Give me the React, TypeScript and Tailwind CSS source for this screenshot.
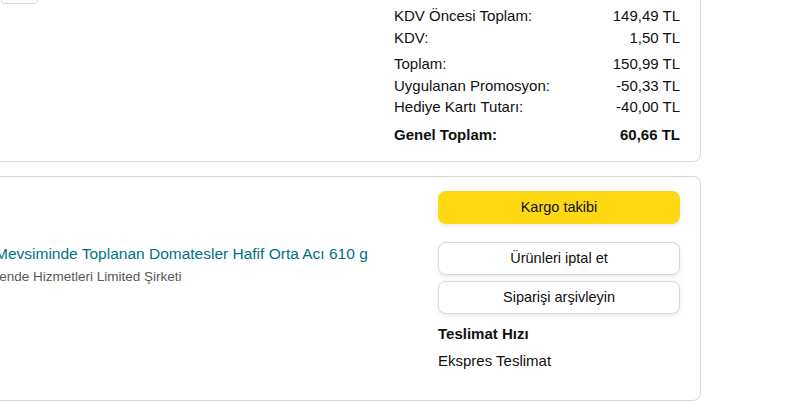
const SUMMARY_GROUPS = [
  [
    { label: "KDV Öncesi Toplam:", value: "149,49 TL" },
    { label: "KDV:", value: "1,50 TL" },
  ],
  [
    { label: "Toplam:", value: "150,99 TL" },
    { label: "Uygulanan Promosyon:", value: "-50,33 TL" },
    { label: "Hediye Kartı Tutarı:", value: "-40,00 TL" },
  ],
]

export default function App() {
  return (
    <div className="w-[785px] h-[410px] overflow-hidden bg-white text-[#0F1111] font-['Liberation_Sans',Arial,sans-serif]">
      <div className="-ml-[19px] w-[720px]">
        {/* Order summary card */}
        <div className="-mt-[40px] border border-[#D5D9D9] rounded-lg pt-[10px] pb-[16px] pl-[19px] pr-[20px] flex justify-between">
          <div className="w-[37px] h-[33px] border border-[#DDDDDD] rounded-b-[3px]" />
          <div className="w-[286px] pt-[34px] text-[15px]">
            {SUMMARY_GROUPS.map((group, gi) => (
              <div key={gi} className="mb-[5px]">
                {group.map((row) => (
                  <div key={row.label} className="flex justify-between leading-[21.5px]">
                    <span>{row.label}</span>
                    <span>{row.value}</span>
                  </div>
                ))}
              </div>
            ))}
            <div className="flex justify-between leading-[21.5px] font-bold pt-[1px]">
              <span>Genel Toplam:</span>
              <span>60,66 TL</span>
            </div>
          </div>
        </div>

        {/* Shipment card */}
        <div className="mt-[14px] border border-[#D5D9D9] rounded-lg h-[225px] pt-[14px] pl-[19px] pr-[20px] flex justify-between">
          <div className="flex-1 min-w-0 overflow-hidden pt-[52px] -ml-[6px] whitespace-nowrap">
            <div className="text-[15.5px] leading-[22px] text-[#007185]">
              Mevsiminde Toplanan Domatesler Hafif Orta Acı 610 g
            </div>
            <div className="-ml-[31px] text-[13.5px] leading-[20px] text-[#565959] mt-[2px]">
              Perakende Hizmetleri Limited Şirketi
            </div>
          </div>
          <div className="w-[242px] flex flex-col text-[14.5px]">
            <button className="h-[33px] rounded-lg bg-[#FFD814] shadow-[0_2px_5px_0_rgba(213,217,217,0.5)]">
              Kargo takibi
            </button>
            <button className="mt-[18px] h-[33px] rounded-lg bg-white border border-[#D5D9D9] shadow-[0_2px_5px_0_rgba(213,217,217,0.5)]">
              Ürünleri iptal et
            </button>
            <button className="mt-[6px] h-[33px] rounded-lg bg-white border border-[#D5D9D9] shadow-[0_2px_5px_0_rgba(213,217,217,0.5)]">
              Siparişi arşivleyin
            </button>
            <div className="mt-[9px] text-[15px] font-bold leading-[22px]">Teslimat Hızı</div>
            <div className="mt-[5px] text-[15px] leading-[22px]">Ekspres Teslimat</div>
          </div>
        </div>
      </div>
    </div>
  )
}
